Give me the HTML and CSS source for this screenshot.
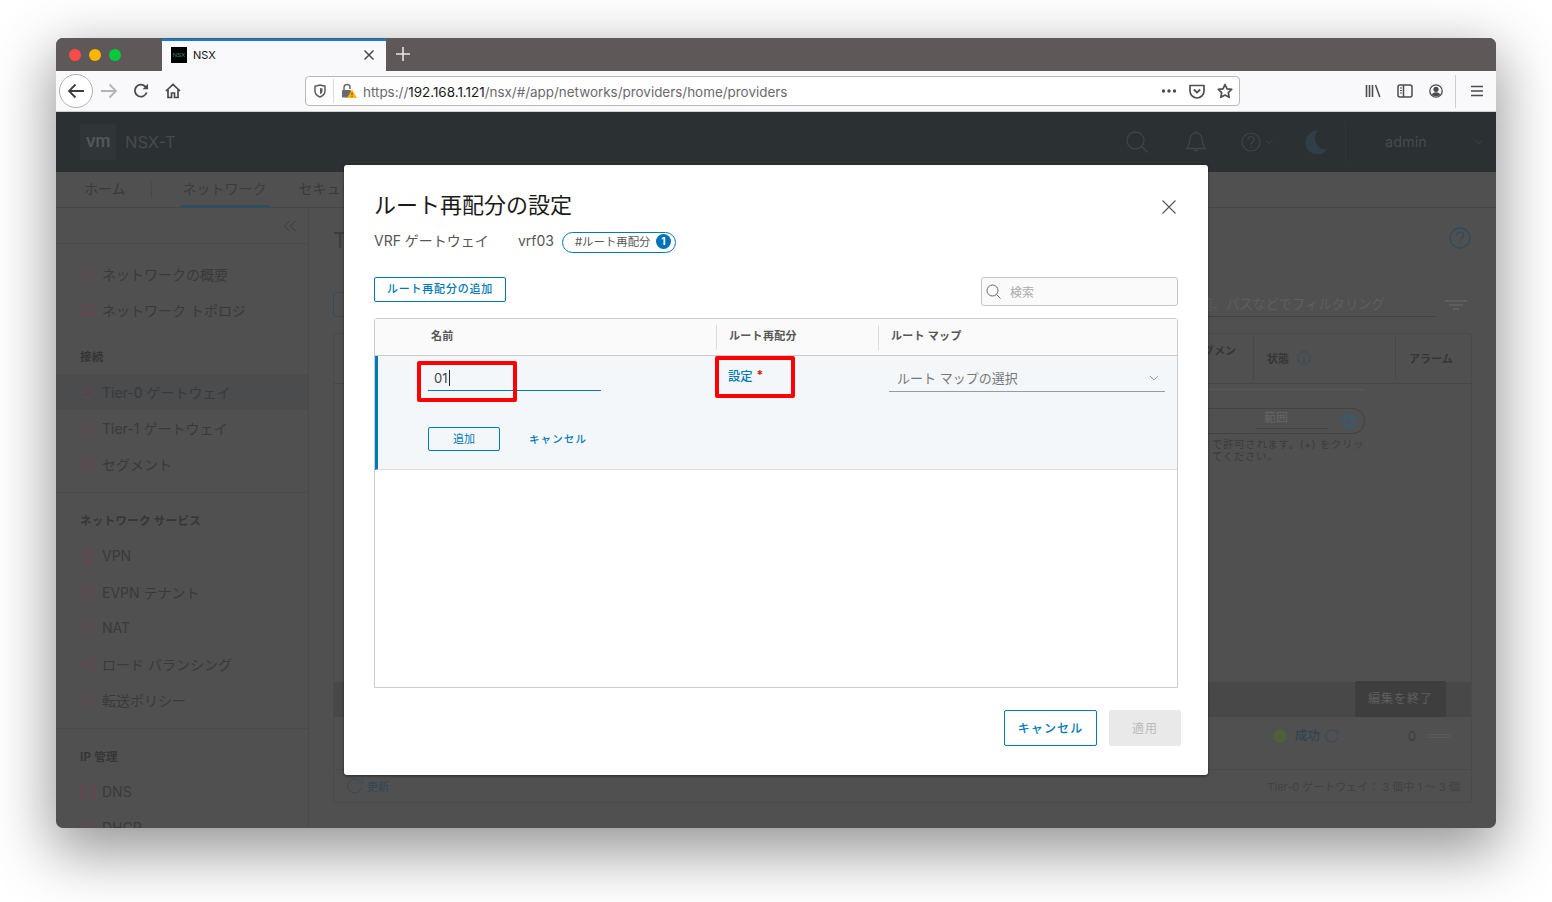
FILE: index.html
```html
<!DOCTYPE html>
<html lang="ja">
<head>
<meta charset="utf-8">
<title>NSX</title>
<link rel="stylesheet" href="styles.css">
</head>
<body>
<div class="window">
  <div class="tabbar">
    <div class="lights"><i class="light red"></i><i class="light yellow"></i><i class="light green"></i></div>
    <div class="tab">
      <span class="favicon">NSX</span>
      <span class="tab-title">NSX</span>
      <svg class="tab-close" width="12" height="12" viewBox="0 0 12 12"><path d="M1.5 1.5l9 9M10.5 1.5l-9 9" stroke="#4a4a4f" stroke-width="1.5" fill="none"/></svg>
    </div>
    <svg class="tab-new" width="16" height="16" viewBox="0 0 16 16"><path d="M8 1v14M1 8h14" stroke="#e6e3e3" stroke-width="1.6" fill="none"/></svg>
  </div>

  <div class="toolbar">
    <span class="back"><svg width="18" height="16" viewBox="0 0 18 16"><path d="M17 8H2M8.5 1.5L2 8l6.500 6.500" stroke="#3d3d40" stroke-width="1.800" fill="none"/></svg></span>
    <svg class="tb-forward" width="18" height="16" viewBox="0 0 18 16"><path d="M1 8h15M9.500 1.500L16 8l-6.500 6.500" stroke="#b4b4b6" stroke-width="1.800" fill="none"/></svg>
    <svg class="tb-reload" width="16" height="16" viewBox="0 0 16 16"><path d="M13.600 9.500A6 6 0 1 1 12.200 3.500L14 5" stroke="#4a4a4f" stroke-width="1.800" fill="none"/><path d="M15 .8V6.200H9.600z" fill="#4a4a4f"/></svg>
    <svg class="tb-home" width="16" height="16" viewBox="0 0 16 16"><path d="M1 8l7-6.500L15 8M3 6.500V14.500H6.500V10H9.500V14.500H13V6.500" stroke="#4a4a4f" stroke-width="1.700" fill="none"/></svg>
    <div class="urlbar">
      <svg class="url-shield" width="14" height="14" viewBox="0 0 14 14"><path d="M2 2.200L7 1l5 1.200V7c0 3-2.500 5-5 6-2.500-1-5-3-5-6z" stroke="#5b5b60" stroke-width="1.500" fill="none"/><path d="M7 4L9.500 4.600V7c0 1.500-1.200 2.600-2.500 3.200z" fill="#5b5b60"/></svg>
      <i class="url-sep"></i>
      <svg class="url-lock" width="16" height="16" viewBox="0 0 16 16"><path d="M3 7V4.500a3 3 0 0 1 6 0V6" stroke="#6a6a6e" stroke-width="1.500" fill="none"/><rect x="1" y="7" width="9" height="7.500" rx="1" fill="#6a6a6e"/><path d="M11 6.500L16 15H6z" fill="#ffb400"/><path d="M11 9.500v2.700M11 13v.8" stroke="#5a4300" stroke-width="1"/></svg>
      <span class="url-text">https://<b>192.168.1.121</b>/nsx/#/app/networks/providers/home/providers</span>
      <span class="url-end">
        <svg width="16" height="4" viewBox="0 0 16 4"><circle cx="2.500" cy="2" r="1.700" fill="#4a4a4f"/><circle cx="8" cy="2" r="1.700" fill="#4a4a4f"/><circle cx="13.500" cy="2" r="1.700" fill="#4a4a4f"/></svg>
        <svg width="16" height="15" viewBox="0 0 16 15"><path d="M1 1.500h14V7a7 7 0 0 1-14 0z" stroke="#4f4f54" stroke-width="1.700" fill="none" stroke-linejoin="round"/><path d="M4.800 5.500L8 8.500l3.200-3" stroke="#4f4f54" stroke-width="1.800" fill="none"/></svg>
        <svg width="16" height="16" viewBox="0 0 16 16"><path d="M8 1.500l2 4.300 4.700.6-3.400 3.200.9 4.700L8 12l-4.200 2.300.9-4.700L1.300 6.400 6 5.800z" stroke="#4f4f54" stroke-width="1.700" fill="none" stroke-linejoin="round"/></svg>
      </span>
    </div>
    <div class="tb-right">
      <svg width="16" height="14" viewBox="0 0 16 14"><path d="M1.500 1v12M4.500 1v12M7.500 1v12" stroke="#4a4a4f" stroke-width="1.600"/><path d="M10.500 1l4.300 12" stroke="#4a4a4f" stroke-width="1.500"/></svg>
      <svg width="16" height="14" viewBox="0 0 16 14"><rect x="1" y="1" width="14" height="12" rx="2" stroke="#4a4a4f" stroke-width="1.500" fill="none"/><path d="M6.500 1v12" stroke="#4a4a4f" stroke-width="1.500"/><path d="M3 4h2M3 6.500h2M3 9h2" stroke="#4a4a4f" stroke-width="1"/></svg>
      <svg width="14" height="14" viewBox="0 0 14 14"><circle cx="7" cy="7" r="6.200" stroke="#4a4a4f" stroke-width="1.300" fill="none"/><circle cx="7" cy="5.300" r="2.600" fill="#4a4a4f"/><path d="M2.600 11c1-2.200 2.500-2.800 4.400-2.800s3.400.6 4.400 2.800C10 12.500 4 12.500 2.600 11z" fill="#4a4a4f"/></svg>
      <i class="tb-divider"></i>
      <svg width="12" height="12" viewBox="0 0 12 12"><path d="M0 1.500h12M0 6h12M0 10.500h12" stroke="#4a4a4f" stroke-width="1.700"/></svg>
    </div>
  </div>

  <header class="apphead">
    <span class="vm-logo">vm</span>
    <span class="product">NSX-T</span>
    <div class="head-icons">
      <svg class="hi-search" width="24" height="24" viewBox="0 0 24 24"><circle cx="10.500" cy="10.500" r="8.500" stroke="#3f4447" stroke-width="1.300" fill="none"/><path d="M16.500 16.500l6 6" stroke="#3f4447" stroke-width="1.300"/></svg>
      <svg class="hi-bell" width="22" height="24" viewBox="0 0 22 24"><path d="M11 3c-4 0-6 3-6 6.500 0 5-2 7-3.500 9h19c-1.500-2-3.500-4-3.500-9C17 6 15 3 11 3zM11 1v2M9 20.500h4" stroke="#3f4447" stroke-width="1.300" fill="none"/></svg>
      <svg class="hi-help" width="20" height="20" viewBox="0 0 20 20"><circle cx="10" cy="10" r="9" stroke="#3f4447" stroke-width="1.200" fill="none"/><path d="M7 7.500c0-4 6-4 6 0 0 2.500-3 2.500-3 5M10 14.500v1.500" stroke="#3f4447" stroke-width="1.200" fill="none"/></svg>
      <svg class="hi-chev" width="8" height="6" viewBox="0 0 8 6"><path d="M1 1.500l3 3 3-3" stroke="#3f4447" stroke-width="1" fill="none"/></svg>
      <svg class="hi-moon" width="24" height="24" viewBox="0 0 24 24"><path d="M14 .5A12 12 0 1 0 23.500 19 11 11 0 0 1 14 .5z" fill="#2f3e48"/></svg>
      <i class="head-div"></i>
      <span class="user">admin</span>
      <svg class="hi-userchev" width="8" height="6" viewBox="0 0 8 6"><path d="M1 1.500l3 3 3-3" stroke="#3f4447" stroke-width="1" fill="none"/></svg>
    </div>
  </header>

  <nav class="navbar">
    <span class="nav-item home">ホーム</span>
    <i class="nav-sep"></i>
    <span class="nav-item active">ネットワーク</span>
    <span class="nav-item sec">セキュリティ</span>
  </nav>

  <div class="workspace">
    <aside class="sidebar">
      <div class="collapse"><svg width="14" height="12" viewBox="0 0 14 12"><path d="M6.500 1L1.500 6l5 5M12.500 1l-5 5 5 5" stroke="#3c3c3c" stroke-width="1" fill="none"/></svg></div>
      <div class="group">
        <div class="item"><svg class="si" viewBox="0 0 16 16"><path d="M3 14A7 7 0 1 1 13 14zM8 10l3-3.500" class="sp"/></svg><span class="lbl">ネットワークの概要</span></div>
        <div class="item"><svg class="si" viewBox="0 0 16 16"><path d="M1 2l4 1 6-1 4 1v11l-4-1-6 1-4-1zM5 3v11M11 2v6" class="sp"/><circle cx="10" cy="10" r="2.500" class="sp"/></svg><span class="lbl">ネットワーク トポロジ</span></div>
        <div class="head">接続</div>
        <div class="item selected"><svg class="si" viewBox="0 0 16 16"><circle cx="8" cy="8" r="6.800" class="sp"/><circle cx="8" cy="8" r="1.500" class="sp"/><path d="M8 2.500v2.500M8 11v2.500M2.500 8H5M11 8h2.500" class="sp"/></svg><span class="lbl">Tier-0 ゲートウェイ</span></div>
        <div class="item"><svg class="si" viewBox="0 0 16 16"><circle cx="8" cy="8" r="6.800" class="sp"/><path d="M8 3v10M2.500 8H5M11 8h2.500" class="sp"/></svg><span class="lbl">Tier-1 ゲートウェイ</span></div>
        <div class="item"><svg class="si" viewBox="0 0 16 16"><path d="M3 1.500h10M2 3.500h12M1.500 6h13v9h-13zM4 10h8M4 13h8" class="sp"/></svg><span class="lbl">セグメント</span></div>
      </div>
      <div class="group">
        <div class="head first">ネットワーク サービス</div>
        <div class="item"><svg class="si" viewBox="0 0 16 16"><circle cx="8" cy="7" r="6.500" class="sp"/><rect x="5.500" y="6" width="5" height="4" class="sp"/><path d="M6 6V4.500a2 2 0 0 1 4 0V6M3 15.500h10" class="sp"/></svg><span class="lbl">VPN</span></div>
        <div class="item"><svg class="si" viewBox="0 0 16 16"><circle cx="8" cy="7" r="6" class="sp"/><path d="M3 4l5 4 5-4M3 15.500h10" class="sp"/></svg><span class="lbl">EVPN テナント</span></div>
        <div class="item"><svg class="si" viewBox="0 0 16 16"><path d="M0 3h3M5 3h4v10H5M0 13h3M0 8h3M5 8h9M12 6l3 2-3 2" class="sp"/></svg><span class="lbl">NAT</span></div>
        <div class="item"><svg class="si" viewBox="0 0 16 16"><circle cx="3" cy="8" r="2" class="sp"/><circle cx="13" cy="2.500" r="1.700" class="sp"/><circle cx="13" cy="8" r="1.700" class="sp"/><circle cx="13" cy="13.500" r="1.700" class="sp"/><path d="M5 7l6.500-3.500M5 8.500h6.500M5 9.500l6.500 3.500" class="sp"/></svg><span class="lbl">ロード バランシング</span></div>
        <div class="item"><svg class="si" viewBox="0 0 16 16"><path d="M8 1L1 8l7 7 5-5M13 6L8 1M6 8h9M12.500 5.500L15 8l-2.500 2.500" class="sp"/></svg><span class="lbl">転送ポリシー</span></div>
      </div>
      <div class="group last">
        <div class="head first">IP 管理</div>
        <div class="item"><svg class="si" viewBox="0 0 16 16"><rect x=".5" y="1.500" width="15" height="13" class="sp"/><path d="M4 1.500v13M12 1.500v13M.5 5.500h3.500M.5 10h3.500M12 5.500h3.500M12 10h3.500" class="sp"/></svg><span class="lbl">DNS</span></div>
        <div class="item"><svg class="si" viewBox="0 0 16 16"><rect x=".5" y="1.500" width="15" height="13" rx="2" class="sp"/><path d="M3 5h10" class="sp"/></svg><span class="lbl">DHCP</span></div>
      </div>
    </aside>

    <main class="main">
      <div class="page-title">
        <span class="page-name">Tier-0 ゲートウェイ</span>
        <svg width="22" height="22" viewBox="0 0 22 22"><circle cx="11" cy="11" r="10" stroke="#2f4d60" stroke-width="1.300" fill="none"/><path d="M7.500 8.500c0-4.500 7-4.500 7 0 0 3-3.500 2.500-3.500 5.500M11 15.500V17" stroke="#2f4d60" stroke-width="1.300" fill="none"/></svg>
      </div>
      <div class="filter-row">
        <span class="add-gw">追加</span>
        <div class="filter-right">
          <span class="filter-input">名前、パスなどでフィルタリング</span>
          <svg width="22" height="10" viewBox="0 0 22 10"><path d="M0 1h22M4 5h14M8 9h6" stroke="#626262" stroke-width="1.400"/></svg>
        </div>
      </div>
      <div class="gw-table">
        <div class="gw-head">
          <span class="gw-col seg">セグメン</span>
          <span class="gw-col state">状態
            <svg width="14" height="14" viewBox="0 0 14 14"><circle cx="7" cy="7" r="6.300" stroke="#2f4d60" fill="none"/><path d="M7 6v4.500M5.500 10.500h3M5.800 6H7M7 3.300v1.200" stroke="#2f4d60" fill="none"/></svg>
          </span>
          <span class="gw-col alarm">アラーム</span>
        </div>
        <div class="gw-body">
          <div class="gw-form">
            <i class="dots"></i>
            <div class="range-pill"><span class="range">範囲</span><span class="range-plus">+</span></div>
            <p class="range-note">で許可されます。(+) をクリッ<br>てください。</p>
          </div>
        </div>
        <div class="gw-band"><span class="finish">編集を終了</span></div>
        <div class="gw-row">
          <i class="ok-dot"></i><span class="ok-text">成功</span>
          <svg class="ok-refresh" width="14" height="14" viewBox="0 0 14 14"><path d="M12.500 8.500A6 6 0 1 1 11 3L13 5V1" stroke="#2f4d60" fill="none"/></svg>
          <span class="count">0</span><i class="mini-bar"></i>
        </div>
      </div>
      <div class="gw-foot">
        <span class="refresh"><svg width="16" height="16" viewBox="0 0 16 16"><path d="M14.500 9.500A7 7 0 1 1 13 3.500L15 5.500V1" stroke="#2f4d60" fill="none"/></svg>更新</span>
        <span class="foot-count">Tier-0 ゲートウェイ： 3 個中 1 ～ 3 個</span>
      </div>
    </main>
  </div>

  <section class="modal">
    <div class="modal-head">
      <h1 class="modal-title">ルート再配分の設定</h1>
      <svg class="modal-x" width="14" height="14" viewBox="0 0 14 14"><path d="M.5.5l13 13M13.500.5l-13 13" stroke="#565656" stroke-width="1.100" fill="none"/></svg>
    </div>
    <div class="modal-sub">
      <span class="sub-label">VRF ゲートウェイ</span>
      <span class="sub-vrf">vrf03</span>
      <span class="pill"><span class="pill-text">#ルート再配分</span><b class="pill-badge">1</b></span>
    </div>
    <div class="modal-tools">
      <span class="btn-add">ルート再配分の追加</span>
      <div class="search">
        <svg width="15" height="15" viewBox="0 0 15 15"><circle cx="6.500" cy="6.500" r="5.500" stroke="#666" stroke-width="1" fill="none"/><path d="M10.500 10.500l4 4" stroke="#666" stroke-width="1"/></svg>
        <span>検索</span>
      </div>
    </div>
    <div class="rt">
      <div class="rt-head">
        <span class="rt-th name">名前</span>
        <span class="rt-th sep">ルート再配分</span>
        <span class="rt-th sep">ルート マップ</span>
      </div>
      <div class="rt-edit">
        <div class="rt-fields">
          <div class="f-name"><span class="name-input">01<i class="caret"></i></span></div>
          <div class="f-set"><span class="set-link">設定</span><span class="req">*</span></div>
          <div class="f-map"><span class="map-select">ルート マップの選択<svg width="10" height="6" viewBox="0 0 10 6"><path d="M1 1l4 4 4-4" stroke="#999" stroke-width="1" fill="none"/></svg></span></div>
        </div>
        <div class="rt-actions">
          <span class="btn-small">追加</span>
          <span class="link-cancel">キャンセル</span>
        </div>
      </div>
    </div>
    <div class="modal-foot">
      <span class="btn-cancel">キャンセル</span>
      <span class="btn-apply">適用</span>
    </div>
    <i class="mark mark-name"></i>
    <i class="mark mark-set"></i>
  </section>
</div>
</body>
</html>
```

FILE: styles.css
```css
* { box-sizing: border-box; }
html, body { margin: 0; height: 100%; background: #fff; overflow: hidden; }
body { font-family: "Inter", "Noto Sans CJK JP", sans-serif; }
i { display: block; font-style: normal; }
svg { display: block; flex: none; }

.window {
  position: relative;
  width: 1440px;
  height: 790px;
  margin: 38px 0 0 56px;
  border-radius: 7px;
  overflow: hidden;
  display: flex;
  flex-direction: column;
  background: #505050;
  box-shadow: 0 20px 60px 4px rgba(0,0,0,.42);
}

/* Browser tabs */
.tabbar { height: 33px; flex: none; background: #5f5858; display: flex; align-items: flex-end; }
.lights { width: 106px; height: 33px; display: flex; align-items: center; gap: 8px; padding-left: 13px; }
.light { width: 12px; height: 12px; border-radius: 50%; }
.red { background: #fc4c48; }
.yellow { background: #fdb500; }
.green { background: #06c93c; }
.tab { width: 224px; height: 32px; background: #f9f9fb; border-top: 2px solid #0a7de8; display: flex; align-items: center; padding: 0 11px 2px 9px; }
.favicon { width: 16px; height: 16px; background: #000; color: #2f9d7c; font: 6px/16px "Liberation Sans", sans-serif; text-align: center; }
.tab-title { margin-left: 6px; flex: 1; font: 11px "Inter", sans-serif; color: #111; }
.tab-new { margin: 0 0 9px 9px; }

/* Browser toolbar */
.toolbar { height: 41px; flex: none; background: #f9f9fb; border-bottom: 1px solid #cfcfd1; display: flex; align-items: center; padding-left: 3px; }
.back { width: 34px; height: 34px; border: 1px solid #b1b1b3; border-radius: 50%; background: #fff; display: flex; align-items: center; justify-content: center; }
.tb-forward { margin-left: 7px; }
.tb-reload { margin-left: 15px; }
.tb-home { margin-left: 16px; }
.urlbar { width: 935px; height: 30px; margin-left: 124px; border: 1px solid #b8b8ba; border-radius: 4px; background: #fff; display: flex; align-items: center; padding: 0 6px 0 8px; }
.url-shield { margin-left: -1px; }
.url-sep { width: 1px; height: 24px; background: #dcdcde; margin-left: 6px; }
.url-lock { margin-left: 7px; }
.url-text { margin-left: 6px; padding-top: 1px; flex: 1; font: 13.430px "Inter", sans-serif; color: #6a6a6e; white-space: nowrap; }
.url-text b { font-weight: 400; color: #1a1a1a; }
.url-end { display: flex; align-items: center; gap: 12px; }
.tb-right { display: flex; align-items: center; margin-left: 125px; gap: 16px; }
.tb-divider { width: 1px; height: 33px; background: #cfcfd1; margin: 0 -1px 0 -4px; }

/* NSX header */
.apphead { height: 60px; flex: none; background: #2b3033; display: flex; align-items: center; padding-left: 24px; }
.vm-logo { width: 36px; height: 36px; background: #303538; border-radius: 2px; color: #54585a; font: 600 17px/34px "Inter", sans-serif; text-align: center; letter-spacing: -.5px; }
.product { margin-left: 9px; font: 16.500px "Inter", sans-serif; color: #464a4d; }
.head-icons { margin-left: auto; display: flex; align-items: center; height: 60px; }
.hi-bell { margin-left: 36px; }
.hi-help { margin-left: 34px; }
.hi-chev { margin-left: 4px; }
.hi-moon { margin-left: 31px; }
.head-div { width: 1px; height: 40px; background: #31363a; margin-left: 17px; }
.user { width: 81px; margin-left: 39px; padding-bottom: 2px; font: 14.500px "Inter", sans-serif; color: #464a4d; }
.hi-userchev { margin-right: 13px; margin-left: 9px; }

/* NSX nav */
.navbar { height: 36px; flex: none; background: #505050; border-bottom: 1px solid #474747; display: flex; align-items: stretch; font-size: 14px; color: #3a3a3a; white-space: nowrap; }
.nav-item { display: flex; align-items: center; height: 36px; padding-bottom: 4px; }
.home { margin-left: 28px; }
.nav-sep { width: 1px; height: 16px; background: #484848; margin: 10px 0 0 25px; }
.active { margin-left: 28px; border-bottom: 3px solid #2f4e62; width: 90px; padding-bottom: 1px; justify-content: center; color: #3c3c3c; }
.sec { margin-left: 29px; }

.workspace { flex: 1; min-height: 0; display: flex; }

/* Sidebar */
.sidebar { width: 253px; flex: none; border-right: 1px solid #4a4a4a; overflow: hidden; }
.collapse { height: 36px; border-bottom: 1px solid #4a4a4a; display: flex; align-items: center; justify-content: flex-end; padding-right: 11px; }
.group { padding: 12px 0 10px; border-bottom: 1px solid #4a4a4a; }
.group + .group { padding-top: 9px; }
.group.last { border-bottom: 0; }
.item { height: 36px; display: flex; align-items: center; gap: 6px; padding-left: 24px; font-size: 14px; color: #3a3a3a; white-space: nowrap; }
.lbl { margin-top: -1px; }
.item.selected { background: #4a4c4e; }
.head { height: 36px; margin-top: 10px; padding-left: 24px; font-size: 11.500px; line-height: 38px; font-weight: 700; letter-spacing: .3px; color: #363636; }
.head.first { margin-top: 0; }
.si { width: 16px; height: 16px; }
.sp { fill: none; stroke: #684552; stroke-width: 1; }

/* Main */
.main { flex: 1; min-width: 0; padding: 0 24px 25px 24px; display: flex; flex-direction: column; }
.page-title { height: 60px; flex: none; display: flex; align-items: center; justify-content: space-between; padding-right: 1px; }
.page-name { font-size: 22px; color: #3c3c3c; }
.filter-row { height: 25px; margin-top: 24px; flex: none; display: flex; justify-content: space-between; }
.add-gw { width: 120px; padding-left: 30px; border: 1px solid #2f4e62; border-radius: 3px; color: #2f4e62; font-size: 11px; line-height: 23px; }
.filter-right { display: flex; align-items: center; gap: 9px; padding-right: 5px; }
.filter-input { width: 250px; height: 25px; border-bottom: 1px solid #434343; font-size: 13.300px; line-height: 24px; color: #5e5e5e; white-space: nowrap; }
.gw-table { flex: 1; margin-top: 16px; min-height: 0; border: 1px solid #4a4a4a; border-bottom: 0; display: flex; flex-direction: column; border-radius: 3px 3px 0 0; }
.gw-head { height: 50px; flex: none; border-bottom: 1px solid #484848; display: flex; font-size: 11px; font-weight: 700; color: #363636; justify-content: flex-end; }
.gw-col { display: flex; align-items: center; border-left: 1px solid #484848; height: 44px; margin-top: 2px; padding-left: 13px; gap: 8px; }
.seg { width: 100px; border-left: 0; align-items: flex-start; padding-top: 6px; padding-left: 39px; white-space: nowrap; }
.state { width: 142px; }
.alarm { width: 76px; }
.gw-body { flex: 1; display: flex; justify-content: flex-end; padding-right: 106px; }
.gw-form { width: 157px; }
.dots { margin-top: 5px; border-top: 1px dotted #5e5e5e; }
.range-pill { height: 26px; margin-top: 18px; border: 1px solid #434343; border-left: 0; border-radius: 0 13px 13px 0; display: flex; align-items: flex-start; padding-left: 48px; }
.range { width: 72px; height: 20px; border-bottom: 1px solid #434343; padding-left: 8px; font-size: 12px; line-height: 18px; color: #666; }
.range-plus { width: 16px; height: 16px; margin: 4px 0 0 13px; background: #405664; border-radius: 50%; color: #505050; font: 700 15px/16px "Inter", sans-serif; text-align: center; }
.range-note { margin: 5px 0 0 4px; font-size: 10.500px; line-height: 12px; letter-spacing: .6px; color: #3c3c3c; white-space: nowrap; }
.gw-band { height: 35px; flex: none; background: #484848; display: flex; justify-content: flex-end; padding-right: 25px; }
.finish { width: 91px; height: 36px; margin-top: -1px; background: #3e3e3e; border-radius: 2px; color: #5f5f5f; font-size: 12px; line-height: 36px; letter-spacing: 1px; text-align: center; }
.gw-row { height: 52px; flex: none; display: flex; align-items: center; justify-content: flex-end; padding: 0 20px 14px 0; color: #3c3c3c; }
.ok-dot { width: 14px; height: 14px; border-radius: 50%; background: #4f5f3c; }
.ok-text { margin: -3px 0 0 8px; font-size: 12.500px; font-weight: 500; color: #2c4555; }
.ok-refresh { margin-left: 5px; }
.count { margin-left: 69px; font-size: 13px; }
.mini-bar { width: 24px; height: 4px; margin-left: 11px; border: 1px solid #5a5a5a; border-radius: 2px; }
.gw-foot { height: 34px; flex: none; border: 1px solid #4a4a4a; display: flex; align-items: center; justify-content: space-between; padding: 0 11px 0 13px; font-size: 11px; color: #424242; }
.refresh { display: flex; align-items: center; gap: 4px; color: #2f4757; font-size: 11px; }

/* Modal */
.modal { position: absolute; left: 288px; top: 127px; width: 864px; height: 610px; background: #fff; border-radius: 3px; padding: 24px 30px 0; box-shadow: 0 1px 3px rgba(0,0,0,.5); }
.modal-head { height: 32px; display: flex; align-items: center; justify-content: space-between; padding-right: 2px; }
.modal-title { margin: 0; font-size: 22px; font-weight: 400; line-height: 32px; color: #1a1a1a; }
.modal-x { margin-top: 4px; }
.modal-sub { height: 22px; margin-top: 9px; display: flex; align-items: center; font-size: 14px; color: #565656; }
.sub-label, .sub-vrf { padding-bottom: 2px; }
.sub-vrf { margin-left: 29px; }
.pill { width: 114px; height: 21px; margin: 2px 0 0 8px; border: 1px solid #0079b8; border-radius: 11px; padding: 0 4px 0 12px; display: flex; align-items: center; justify-content: space-between; font-size: 11.400px; color: #565656; }
.pill-text { margin-top: -3px; }
.pill-badge { width: 15px; height: 15px; margin-top: -1px; background: #0072b5; color: #fff; border-radius: 50%; font: 700 10px/15px "Inter", sans-serif; text-align: center; }
.modal-tools { height: 29px; margin-top: 25px; display: flex; justify-content: space-between; align-items: flex-start; }
.btn-add { width: 132px; height: 25px; border: 1px solid #0079b8; border-radius: 2px; color: #0079b8; font-size: 11px; font-weight: 500; line-height: 22px; text-align: center; letter-spacing: .8px; }
.search { width: 197px; height: 29px; border: 1px solid #c4c4c4; border-radius: 3px; background: #fafafa; display: flex; align-items: center; padding-left: 4px; gap: 9px; font-size: 12px; color: #aaa; }
.rt { height: 370px; margin-top: 12px; border: 1px solid #ccc; border-radius: 3px 3px 0 0; }
.rt-head { height: 37px; background: #fafafa; border-bottom: 1px solid #ccc; display: grid; grid-template-columns: 341px 162px 1fr; align-items: center; font-size: 11px; font-weight: 700; color: #565656; letter-spacing: .3px; }
.rt-th { height: 25px; line-height: 23px; white-space: nowrap; }
.rt-th.name { padding-left: 56px; }
.rt-th.sep { border-left: 1px solid #ddd; padding-left: 12px; }
.rt-edit { height: 114px; background: #f3f7fa; border-left: 3px solid #0079b8; border-bottom: 1px solid #ddd; }
.rt-fields { height: 71px; display: grid; grid-template-columns: 338px 162px 1fr; }
.f-name { padding: 10px 0 0 50px; }
.name-input { width: 173px; height: 25px; border-bottom: 1px solid #0079b8; display: flex; align-items: center; padding-left: 6px; font-size: 13px; color: #444; }
.caret { width: 1px; height: 16px; background: #222; margin-left: 1px; }
.f-set { padding: 11px 0 0 12px; font-size: 12.300px; font-weight: 500; line-height: 20px; display: flex; align-items: flex-start; }
.set-link { color: #0079b8; }
.req { color: #c92100; margin-left: 4px; font-size: 12px; line-height: 16px; font-weight: 700; }
.f-map { padding: 11px 12px 0 11px; }
.map-select { height: 25px; border-bottom: 1px solid #9a9a9a; display: flex; align-items: center; justify-content: space-between; padding: 0 6px 3px 8px; font-size: 13px; color: #777; }
.rt-actions { display: flex; align-items: center; padding-left: 50px; }
.btn-small { width: 72px; height: 24px; border: 1px solid #0079b8; border-radius: 2px; color: #0079b8; font-size: 11px; line-height: 22px; text-align: center; }
.link-cancel { margin-left: 29px; padding-bottom: 2px; color: #0079b8; font-size: 10.500px; font-weight: 500; letter-spacing: 1.100px; }
.modal-foot { height: 36px; margin: 22px -3px 0 0; display: flex; justify-content: flex-end; gap: 12px; }
.btn-cancel { width: 93px; border: 1px solid #0079b8; border-radius: 2px; color: #0079b8; font-size: 12px; font-weight: 500; line-height: 36px; letter-spacing: 1.100px; text-align: center; }
.btn-apply { width: 72px; background: #e9e9e9; border-radius: 2px; color: #bbb; font-size: 12px; line-height: 38px; letter-spacing: 1px; text-align: center; }
.mark { position: absolute; border: 4px solid #f00; border-radius: 2px; }
.mark-name { left: 73px; top: 196px; width: 100px; height: 41px; }
.mark-set { left: 371px; top: 191px; width: 80px; height: 42px; }
```
